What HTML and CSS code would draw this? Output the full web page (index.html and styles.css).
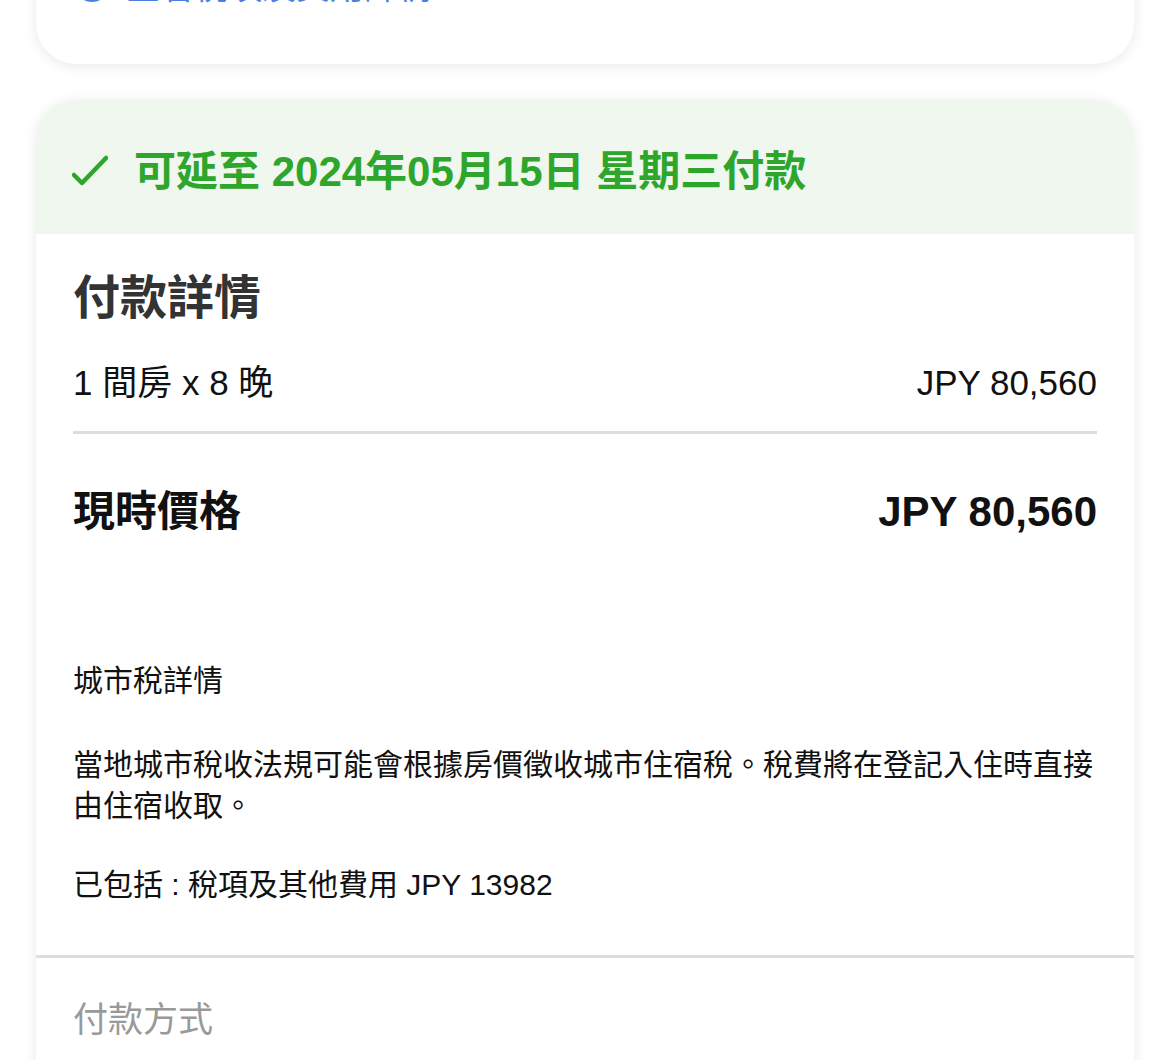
FILE: index.html
```html
<!DOCTYPE html>
<html lang="zh-Hant">
<head>
    <meta charset="UTF-8">
    <meta name="viewport" content="width=device-width, initial-scale=1.0">
    <title>付款詳情</title>
    <link rel="stylesheet" href="styles.css">
</head>
<body>
    <div class="page">
        <!-- 上一張卡片 (只看到底部) -->
        <div class="card card-top">
            <a class="tax-link" href="#">
                <svg class="tax-link-icon" viewBox="0 0 40 40" width="40" height="40"><circle cx="20" cy="20" r="16" fill="none" stroke="#4a7fe0" stroke-width="4"/></svg>
                查看稅項及費用詳情
            </a>
        </div>

        <!-- 付款卡片 -->
        <div class="card card-pay">
            <div class="pay-later">
                <svg class="check" viewBox="0 0 36 32" width="36" height="32">
                    <polyline points="2,20 10,28 34,3" fill="none" stroke="#2ea52b" stroke-width="4.5" stroke-linecap="round" stroke-linejoin="round"/>
                </svg>
                <span>可延至 2024年05月15日 星期三付款</span>
            </div>

            <div class="details">
                <h2 class="details-title">付款詳情</h2>
                <div class="row">
                    <span>1 間房 x 8 晚</span>
                    <span>JPY 80,560</span>
                </div>
                <hr class="divider">
                <div class="row row-total">
                    <span>現時價格</span>
                    <span>JPY 80,560</span>
                </div>

                <p class="tax-title">城市稅詳情</p>
                <p class="tax-text">當地城市稅收法規可能會根據房價徵收城市住宿稅。稅費將在登記入住時直接由住宿收取。</p>
                <p class="tax-text tax-included">已包括 : 稅項及其他費用 JPY 13982</p>
            </div>

            <div class="method">付款方式</div>
        </div>
    </div>
</body>
</html>
```

FILE: styles.css
```css
body {
    margin: 0;
    background-color: #fff;
    font-family: "Liberation Sans", "Noto Sans CJK TC", Arial, sans-serif;
    color: #111;
}

.page {
    padding: 0 36px;
    overflow: hidden;
    height: 1060px;
}

.card {
    background: #fff;
    border-radius: 40px;
    box-shadow: 0 2px 14px rgba(0, 0, 0, 0.09);
}

/* top card, mostly scrolled away */
.card-top {
    margin-top: -40px;
    padding: 0 36px 56px;
    border-top-left-radius: 0;
    border-top-right-radius: 0;
}
.tax-link {
    display: flex;
    align-items: center;
    gap: 14px;
    height: 48px;
    font-size: 34px;
    color: #4a7fe0;
    text-decoration: none;
}

.card-pay {
    margin-top: 36px;
    border-bottom-left-radius: 0;
    border-bottom-right-radius: 0;
    overflow: hidden;
}

.pay-later {
    display: flex;
    align-items: center;
    height: 134px;
    padding: 0 36px;
    background-color: #f0f7ef;
    color: #2ea52b;
    font-size: 42px;
    font-weight: bold;
}
.check {
    margin-right: 26px;
    margin-top: 8px;
}

.details {
    padding: 34px 37px 50px;
    border-bottom: 3px solid #ddd;
}

.details-title {
    margin: 0;
    font-size: 47px;
    line-height: 60px;
    font-weight: bold;
    color: #333;
}

.row {
    display: flex;
    justify-content: space-between;
    align-items: center;
    margin-top: 33px;
    font-size: 35px;
    line-height: 44px;
}

.divider {
    margin: 26px 0 0;
    border: none;
    height: 3px;
    background-color: #ddd;
}

.row-total {
    margin-top: 52px;
    font-size: 42px;
    line-height: 52px;
    font-weight: bold;
}

.tax-title {
    margin: 122px 0 0;
    font-size: 30px;
    line-height: 42px;
}

.tax-text {
    margin: 42px 0 0;
    font-size: 30px;
    line-height: 41px;
}
.tax-included {
    margin-top: 38px;
}

.method {
    padding: 40px 37px 80px;
    font-size: 35px;
    line-height: 44px;
    color: #999;
}
```
